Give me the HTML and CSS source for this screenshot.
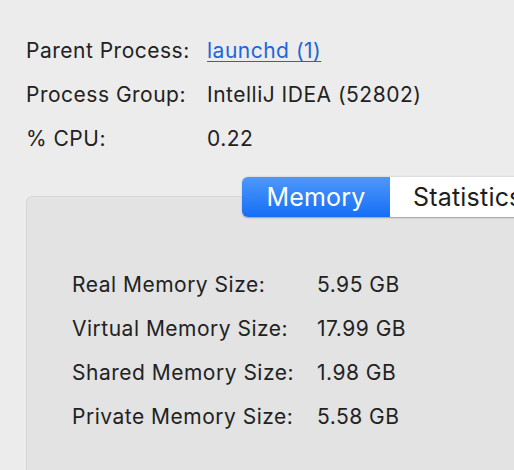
FILE: index.html
```html
<!DOCTYPE html>
<html>
<head>
<meta charset="utf-8">
<link rel="stylesheet" href="styles.css">
</head>
<body>
<div class="window">
  <div class="info">
    <div class="label">Parent Process:</div>
    <div class="value"><a class="link" href="#">launchd (1)</a></div>
    <div class="label">Process Group:</div>
    <div class="value">IntelliJ IDEA (52802)</div>
    <div class="label">% CPU:</div>
    <div class="value">0.22</div>
  </div>
  <div class="tabview">
    <div class="segmented">
      <div class="seg seg-active">Memory</div>
      <div class="seg">Statistics</div>
    </div>
    <div class="panel">
      <div class="mem">
        <div class="label">Real Memory Size:</div>
        <div class="value">5.95 GB</div>
        <div class="label">Virtual Memory Size:</div>
        <div class="value">17.99 GB</div>
        <div class="label">Shared Memory Size:</div>
        <div class="value">1.98 GB</div>
        <div class="label">Private Memory Size:</div>
        <div class="value">5.58 GB</div>
      </div>
    </div>
  </div>
</div>
</body>
</html>
```

FILE: styles.css
```css
html, body {
  margin: 0;
  padding: 0;
  background: #ececec;
  overflow: hidden;
}
body {
  width: 514px;
  height: 470px;
  font-family: Inter, "Liberation Sans", sans-serif;
  color: #222222;
  font-size: 21px;
  letter-spacing: 0.5px;
}
.window {
  padding: 29px 0 0 26px;
}
.info {
  display: grid;
  grid-template-columns: 181px auto;
  grid-auto-rows: 44px;
  line-height: 44px;
}
.link {
  color: #1c66d8;
  text-decoration: underline;
  text-underline-offset: 3px;
  text-decoration-thickness: 1px;
}
.tabview {
  margin-top: 16px;
  width: 540px;
}
.segmented {
  position: relative;
  z-index: 1;
  display: flex;
  margin-left: 216px;
  height: 40px;
  border-radius: 6px;
  box-shadow: 0 0.5px 1.5px rgba(0,0,0,0.3);
  overflow: hidden;
  width: 300px;
}
.seg {
  font-size: 25px;
  letter-spacing: 0.2px;
  line-height: 40px;
  padding: 0 23px;
  background: #ffffff;
  color: #1e1e1e;
  white-space: nowrap;
}
.seg-active {
  width: 148px;
  flex: none;
  box-sizing: border-box;
  padding: 0;
  text-align: center;
  color: #ffffff;
  background: linear-gradient(#4f98fa, #156ef5);
}
.panel {
  margin-top: -21px;
  background: #e3e3e3;
  border: 1px solid #d6d6d6;
  border-radius: 6px;
  height: 320px;
  padding: 66px 0 0 45px;
}
.mem {
  display: grid;
  grid-template-columns: 245px auto;
  grid-auto-rows: 44px;
  line-height: 44px;
}
```
